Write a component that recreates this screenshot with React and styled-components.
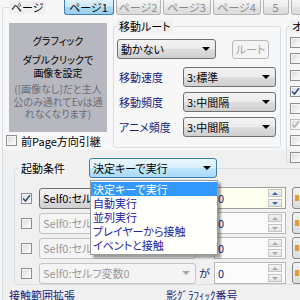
import React from 'react'
import styled, { createGlobalStyle } from 'styled-components'

const GlobalStyle = createGlobalStyle`
  html, body { margin: 0; padding: 0; }
  body {
    background: #f7f7f7;
    font-family: "Noto Sans CJK JP", "Noto Sans", sans-serif;
    font-size: 11px;
    font-feature-settings: "palt";
    color: #000;
  }
`

const navy = '#22227e'
const groupLine = '#d5dfe5'

const Window = styled.div`
  width: 300px;
  height: 300px;
  overflow: hidden;
  padding-left: 2px;
  box-sizing: border-box;
`

const PageGroup = styled.fieldset`
  margin: 0;
  padding: 5px 0 0 6px;
  width: 320px;
  min-width: 0;
  border: 1px solid ${groupLine};
  border-right: none;
  border-bottom: none;
  border-radius: 3px 0 0 0;
`

const Legend = styled.legend`
  padding: 0;
  margin: 0;
`

const LegendRow = styled.div`
  display: flex;
  align-items: center;
  gap: ${p => p.$gap || 0}px;
`

const GroupLabel = styled.span`
  display: block;
  padding: 0 2px;
  line-height: 13px;
  background: ${p => p.$bg || '#f0f0f0'};
  margin-right: ${p => p.$mr || 0}px;
  white-space: nowrap;
`

const Tab = styled.div`
  box-sizing: border-box;
  width: ${p => p.$w}px;
  height: 16px;
  margin-top: -1px;
  flex: none;
  border: 1px solid ${p => (p.$active ? '#3c7fb1' : '#b4b4b4')};
  border-top-color: transparent;
  border-radius: 0 0 3px 3px;
  background: ${p =>
    p.$active
      ? 'linear-gradient(#e3f3fc, #c6e6f7 50%, #a9d8f1 51%, #9ccfee)'
      : 'linear-gradient(#f4f4f4, #ececec 50%, #e2e2e2 51%, #dcdcdc)'};
  color: ${p => (p.$active ? '#000' : '#8a8a8a')};
  display: flex;
  align-items: center;
  justify-content: center;
  line-height: 14px;
  white-space: nowrap;
`

const TopArea = styled.div`
  display: flex;
  align-items: flex-start;
  height: 130px;
`

const LeftCol = styled.div`
  width: 98px;
  display: flex;
  flex-direction: column;
`

const GraphicPanel = styled.div`
  margin-top: 3px;
  height: 109px;
  background: #b7b7bf;
  display: flex;
  flex-direction: column;
  align-items: center;
  padding-top: 11px;
  box-sizing: border-box;
  font-size: 10px;
  text-align: center;
`

const PanelText = styled.div`
  line-height: ${p => p.$lh || 13}px;
  margin-top: ${p => p.$mt || 0}px;
  color: ${p => (p.$note ? '#6c6c76' : '#000')};
  white-space: pre;
`

const CheckRow = styled.label`
  display: flex;
  align-items: center;
  margin-left: -7px;
  padding-left: 4px;
  width: 112px;
  height: 17px;
  gap: 4px;
  white-space: nowrap;
`

const Box = styled.span`
  flex: none;
  box-sizing: border-box;
  width: 11px;
  height: 11px;
  border: 1px solid ${p => (p.$disabled ? '#bdbdbd' : '#8f8f8f')};
  background: linear-gradient(135deg, #d9d9d9, #f3f3f3 70%, #ffffff);
  box-shadow: inset 0 0 0 1px #f6f6f6;
  display: flex;
  align-items: center;
  justify-content: center;
`

const Checkbox = ({ checked, disabled }) => (
  <Box $disabled={disabled}>
    {checked && (
      <svg width="9" height="9" viewBox="0 0 9 9">
        <path
          d="M1 4.5 L3.5 7 L8 1.2"
          fill="none"
          stroke={disabled ? '#b4b4b4' : '#2d4f86'}
          strokeWidth="1.6"
        />
      </svg>
    )}
  </Box>
)

const Group = styled.fieldset`
  margin: 0 0 0 ${p => p.$ml || 0}px;
  box-sizing: border-box;
  width: ${p => p.$w}px;
  height: ${p => p.$h}px;
  min-width: 0;
  padding: ${p => p.$pad};
  border: 1px solid ${groupLine};
  border-radius: 3px;
  flex: none;
  position: relative;
`

const Combo = styled.div`
  position: relative;
  flex: none;
  box-sizing: border-box;
  width: ${p => p.$w}px;
  height: ${p => p.$h || 20}px;
  margin-left: ${p => p.$ml || 0}px;
  border: 1px solid ${p => (p.$hot ? '#3c7fb1' : p.$disabled ? '#c2c4c6' : '#707070')};
  border-radius: 3px;
  background: ${p =>
    p.$hot
      ? 'linear-gradient(#eaf6fd, #d9f0fc 50%, #bee6fd 51%, #a7d9f5)'
      : p.$disabled
        ? '#f4f4f4'
        : 'linear-gradient(#f3f3f3, #ebebeb 50%, #dddddd 51%, #cfcfcf)'};
  color: ${p => (p.$disabled ? '#9a9a9a' : '#000')};
  display: flex;
  align-items: center;
  padding: 0 5px 0 3px;
  white-space: nowrap;
`

const ComboText = styled.span`
  flex: 1;
  overflow: hidden;
  line-height: 14px;
`

const Arrow = styled.span`
  flex: none;
  width: 0;
  height: 0;
  border-left: 4px solid transparent;
  border-right: 4px solid transparent;
  border-top: 4px solid ${p => (p.$disabled ? '#a8a8a8' : '#000')};
`

const Select = ({ w, h, ml, hot, disabled, children }) => (
  <Combo $w={w} $h={h} $ml={ml} $hot={hot} $disabled={disabled}>
    <ComboText>{children}</ComboText>
    <Arrow $disabled={disabled} />
  </Combo>
)

const PlainButton = styled.div`
  box-sizing: border-box;
  width: 37px;
  height: 19px;
  margin-left: 16px;
  border: 1px solid #b5b8ba;
  border-radius: 3px;
  background: #f4f4f4;
  color: #a3a3a3;
  display: flex;
  align-items: center;
  justify-content: center;
`

const RouteTop = styled.div`
  display: flex;
  align-items: center;
`

const SettingList = styled.div`
  margin-top: 8px;
  display: flex;
  flex-direction: column;
  gap: 5px;
`

const SettingRow = styled.div`
  display: flex;
  align-items: center;
  height: 20px;
`

const SettingLabel = styled.span`
  width: 66px;
  padding-left: 2px;
  box-sizing: border-box;
  color: ${navy};
  white-space: nowrap;
`

const OptionList = styled.div`
  display: flex;
  flex-direction: column;
  gap: 5.4px;
`

const LowerArea = styled.div`
  background: #f0f0f0;
  margin-left: -6px;
  padding: 8px 0 0 6px;
  height: 160px;
`

const ListPopup = styled.div`
  position: absolute;
  top: 21px;
  left: 0;
  z-index: 10;
  width: 128px;
  box-sizing: border-box;
  padding: 1px 0 2px;
  background: #fffffc;
  border: 1px solid #9c9c9c;
  box-shadow: 3px 3px 2px rgba(0, 0, 0, 0.35);
`

const ListItem = styled.div`
  height: 14px;
  line-height: 14px;
  padding-left: 2px;
  color: ${p => (p.$active ? '#fff' : '#2424a4')};
  background: ${p => (p.$active ? '#3399ff' : 'transparent')};
  white-space: nowrap;
`

const TriggerRows = styled.div`
  display: flex;
  flex-direction: column;
  gap: 3px;
`

const TriggerRow = styled.div`
  display: flex;
  align-items: center;
  height: 22px;
  padding-left: 2px;
`

const Ga = styled.span`
  width: 12px;
  margin: 0 3px;
  color: ${navy};
`

const NumField = styled.div`
  box-sizing: border-box;
  width: 72px;
  height: 22px;
  flex: none;
  border: 1px solid ${p => (p.$active ? '#9d9d9d' : '#b9b9b9')};
  background: ${p => (p.$active ? '#fffff0' : '#fbfbfb')};
  display: flex;
  align-items: center;
  padding: 0 3px 0 3px;
  color: ${navy};
`

const NumText = styled.span`
  flex: 1;
`

const Spin = styled.div`
  display: flex;
  flex-direction: column;
  gap: 2px;
`

const SpinBtn = styled.div`
  box-sizing: border-box;
  width: 14px;
  height: 8px;
  border: 1px solid #c3c3c3;
  background: linear-gradient(#f4f4f4, #e2e2e2);
  display: flex;
  align-items: center;
  justify-content: center;
`

const Tri = styled.span`
  width: 0;
  height: 0;
  border-left: 3px solid transparent;
  border-right: 3px solid transparent;
  ${p =>
    p.$up
      ? `border-bottom: 3px solid ${p.$c};`
      : `border-top: 3px solid ${p.$c};`}
`

const SideButton = styled.div`
  box-sizing: border-box;
  flex: none;
  width: 20px;
  height: 22px;
  margin-left: 6px;
  border: 1px solid #8a8a8a;
  border-radius: 3px;
  background: linear-gradient(#f3f3f3, #dcdcdc);
  padding: 7px 0 0 2px;
`

const Swatch = styled.span`
  display: block;
  width: 4px;
  height: 6px;
  background: #e79a2c;
`

const BottomLabels = styled.div`
  display: flex;
  margin-top: 3px;
  color: ${navy};
  line-height: 14px;
  white-space: nowrap;
`

const BottomLabel = styled.span`
  width: ${p => p.$w || 'auto'};
`

const tabs = [
  { text: 'ページ1', w: 50, active: true },
  { text: 'ページ2', w: 45 },
  { text: 'ページ3', w: 48 },
  { text: 'ページ4', w: 48 },
  { text: '5', w: 26 },
  { text: '6', w: 30 },
]

const settings = [
  ['移動速度', '3:標準'],
  ['移動頻度', '3:中間隔'],
  ['アニメ頻度', '3:中間隔'],
]

const options = [false, false, false, 'on', false, 'dim', false, false]

const triggers = ['決定キーで実行', '自動実行', '並列実行', 'プレイヤーから接触', 'イベントと接触']

function NumberBox({ active }) {
  const c = active ? '#3b63b3' : '#a9a9a9'
  return (
    <NumField $active={active}>
      <NumText>0</NumText>
      <Spin>
        <SpinBtn><Tri $up $c={c} /></SpinBtn>
        <SpinBtn><Tri $c={c} /></SpinBtn>
      </Spin>
    </NumField>
  )
}

export default function App() {
  return (
    <Window>
      <GlobalStyle />
      <PageGroup>
        <Legend>
          <LegendRow $gap={2}>
            <GroupLabel $mr={16}>ページ</GroupLabel>
            {tabs.map(t => (
              <Tab key={t.text} $w={t.w} $active={t.active}>{t.text}</Tab>
            ))}
          </LegendRow>
        </Legend>

        <TopArea>
          <LeftCol>
            <GraphicPanel>
              <PanelText>グラフィック</PanelText>
              <PanelText $mt={6}>{'ダブルクリックで\n画像を設定'}</PanelText>
              <PanelText $mt={4} $lh={12.5} $note>
                {'([画像なし]だと主人\n公のみ通れてEvは通\nれなくなります)'}
              </PanelText>
            </GraphicPanel>
            <CheckRow>
              <Checkbox />
              前Page方向引継
            </CheckRow>
          </LeftCol>

          <Group $ml={6} $w={168} $h={128} $pad="6px 3px 0 3px">
            <Legend>
              <GroupLabel $bg="#f0f0f0">移動ルート</GroupLabel>
            </Legend>
            <RouteTop>
              <Select w={99}>動かない</Select>
              <PlainButton>ルート</PlainButton>
            </RouteTop>
            <SettingList>
              {settings.map(([label, value]) => (
                <SettingRow key={label}>
                  <SettingLabel>{label}</SettingLabel>
                  <Select w={93}>{value}</Select>
                </SettingRow>
              ))}
            </SettingList>
          </Group>

          <Group $ml={5} $w={40} $h={143} $pad="4px 0 0 3px">
            <Legend>
              <GroupLabel $bg="#f0f0f0">オプション</GroupLabel>
            </Legend>
            <OptionList>
              {options.map((o, i) => (
                <Checkbox key={i} checked={!!o} disabled={o === 'dim'} />
              ))}
            </OptionList>
          </Group>
        </TopArea>

        <LowerArea>
          <Group $ml={5} $w={300} $h={127} $pad="9px 0 2px 4px">
            <Legend>
              <LegendRow>
                <GroupLabel $bg="#f4f4f4" $mr={22}>起動条件</GroupLabel>
                <Combo $w={128} $hot>
                  <ComboText>決定キーで実行</ComboText>
                  <Arrow />
                  <ListPopup>
                    {triggers.map((t, i) => (
                      <ListItem key={t} $active={i === 0}>{t}</ListItem>
                    ))}
                  </ListPopup>
                </Combo>
              </LegendRow>
            </Legend>
            <TriggerRows>
              {[0, 1, 2, 3].map(i => (
                <TriggerRow key={i}>
                  <Checkbox checked={i === 0} />
                  <Select w={157} h={21} ml={7} disabled={i > 0}>Self0:セルフ変数0</Select>
                  <Ga>が</Ga>
                  <NumberBox active={i === 0} />
                  <SideButton><Swatch /></SideButton>
                </TriggerRow>
              ))}
            </TriggerRows>
          </Group>
          <BottomLabels>
            <BottomLabel $w="157px">接触範囲拡張</BottomLabel>
            <BottomLabel>影ｸﾞﾗﾌｨｯｸ番号</BottomLabel>
          </BottomLabels>
        </LowerArea>
      </PageGroup>
    </Window>
  )
}
